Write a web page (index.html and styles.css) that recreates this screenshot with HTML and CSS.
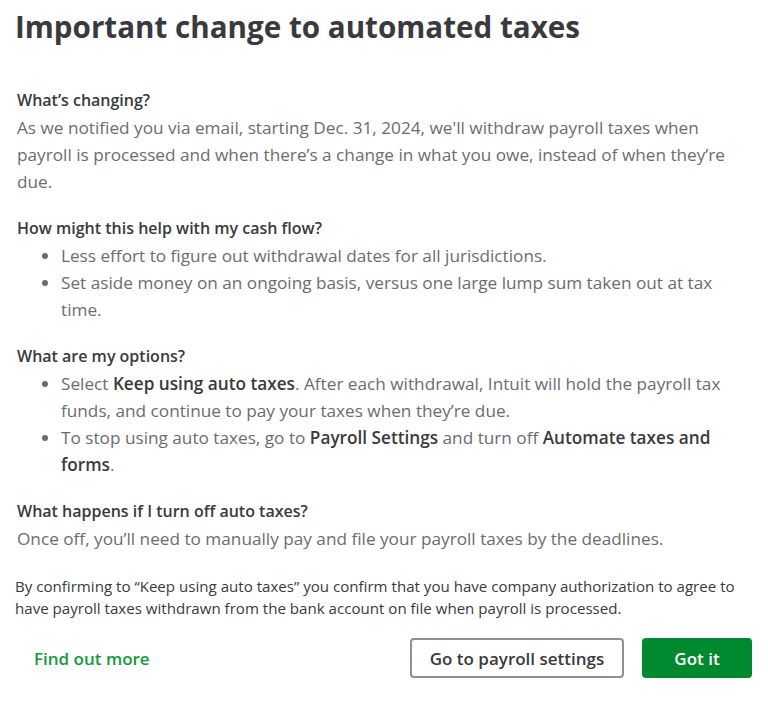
FILE: index.html
```html
<!DOCTYPE html>
<html lang="en">
<head>
<meta charset="utf-8">
<title>Important change to automated taxes</title>
<link rel="stylesheet" href="styles.css">
</head>
<body>
<div class="dialog">
  <h1 class="title">Important change to automated taxes</h1>
  <div class="content">
    <section class="block">
      <h2 class="q">What’s changing?</h2>
      <p class="txt">As we notified you via email, starting Dec. 31, 2024, we'll withdraw payroll taxes when payroll is processed and when there’s a change in what you owe, instead of when they’re due.</p>
    </section>
    <section class="block">
      <h2 class="q">How might this help with my cash flow?</h2>
      <ul class="list">
        <li>Less effort to figure out withdrawal dates for all jurisdictions.</li>
        <li>Set aside money on an ongoing basis, versus one large lump sum taken out at tax time.</li>
      </ul>
    </section>
    <section class="block">
      <h2 class="q">What are my options?</h2>
      <ul class="list">
        <li>Select <strong class="em">Keep using auto taxes</strong>. After each withdrawal, Intuit will hold the payroll tax funds, and continue to pay your taxes when they’re due.</li>
        <li>To stop using auto taxes, go to <strong class="em">Payroll Settings</strong> and turn off <strong class="em">Automate taxes and forms</strong>.</li>
      </ul>
    </section>
    <section class="block">
      <h2 class="q">What happens if I turn off auto taxes?</h2>
      <p class="txt">Once off, you’ll need to manually pay and file your payroll taxes by the deadlines.</p>
    </section>
  </div>
  <p class="legal">By confirming to “Keep using auto taxes” you confirm that you have company authorization to agree to have payroll taxes withdrawn from the bank account on file when payroll is processed.</p>
  <div class="footer">
    <a class="link" href="#">Find out more</a>
    <div class="actions">
      <button class="btn btn-secondary">Go to payroll settings</button>
      <button class="btn btn-primary">Got it</button>
    </div>
  </div>
</div>
</body>
</html>
```
FILE: styles.css
```css
* { box-sizing: border-box; }
html, body { margin: 0; padding: 0; background: #fff; }
body { font-family: "Open Sans", Lato, sans-serif; color: #393a3d; }
.dialog { width: 768px; padding: 0 15px; }
.title {
  margin: 0;
  padding-top: 9px;
  font-size: 29.6px;
  line-height: 36px;
  font-weight: 700;
  color: #393a3d;
}
.content { padding-left: 2px; width: 724px; margin-top: 42px; }
.block { margin-bottom: 20px; }
.q {
  margin: 0;
  font-size: 16px;
  line-height: 27px;
  font-weight: 600;
  color: #393a3d;
}
.txt { margin: 0; font-size: 17.2px; line-height: 27px; color: #6b6c72; }
.list { margin: 0; padding-left: 44px; font-size: 17.2px; line-height: 27px; color: #6b6c72; }
.em { color: #393a3d; font-weight: 600; }
.legal { margin: 23px 0 0; font-size: 15.1px; line-height: 22px; color: #393a3d; width: 740px; }
.footer { display: flex; align-items: center; justify-content: space-between; margin-top: 19px; padding: 0 0 0 19px; width: 737px; }
.link { color: #14993d; font-weight: 600; font-size: 17px; text-decoration: none; }
.actions { display: flex; gap: 18px; }
.btn { height: 40px; border-radius: 4px; font-family: inherit; font-size: 17px; font-weight: 600; padding: 0; cursor: pointer; }
.btn-secondary { background: #fff; border: 2px solid #8d9096; color: #393a3d; width: 214px; }
.btn-primary { background: #00892e; border: 0; color: #fff; width: 110px; }
```
